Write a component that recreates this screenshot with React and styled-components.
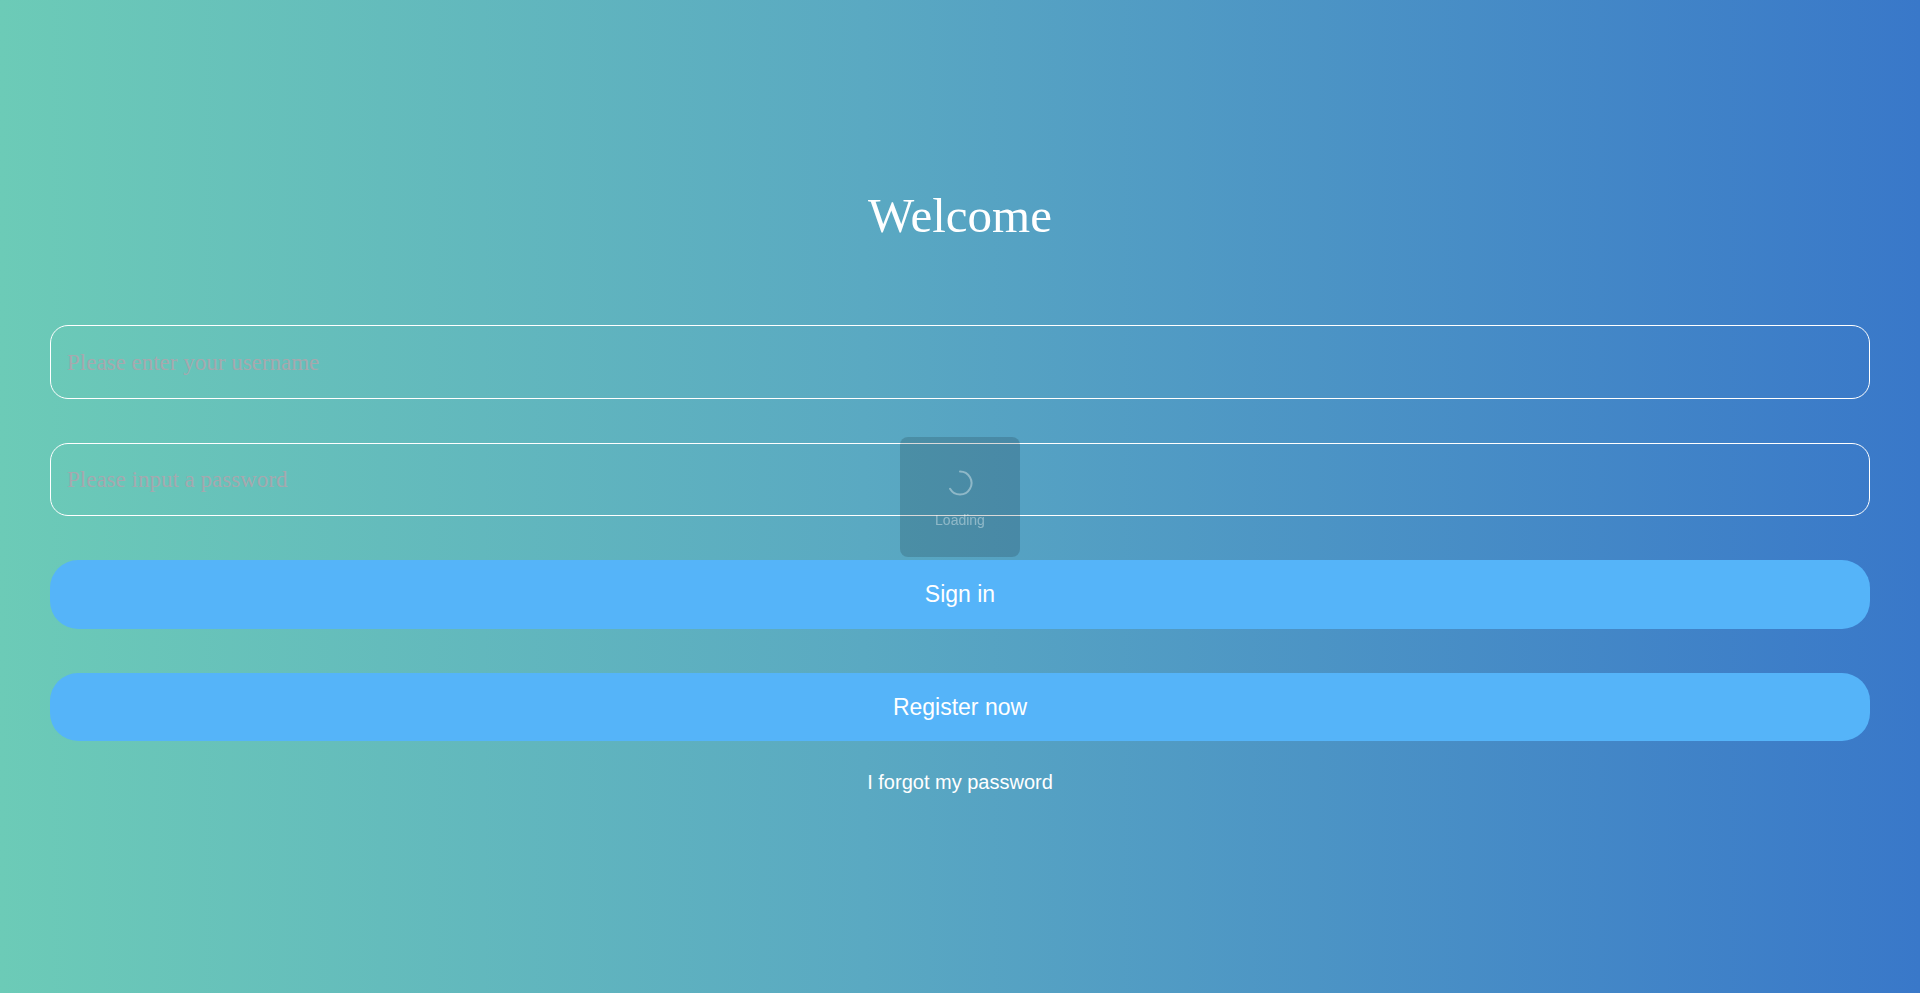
import React from 'react';
import styled, { createGlobalStyle } from 'styled-components';

const GlobalStyle = createGlobalStyle`
  * {
    box-sizing: border-box;
  }
  html,
  body {
    margin: 0;
    padding: 0;
  }
  body {
    font-family: 'Liberation Serif', 'Times New Roman', serif;
  }
`;

function Spinner() {
  return (
    <svg width='26' height='26' viewBox='0 0 26 26' fill='none'>
      <path
        d='M13 1.5 A11.5 11.5 0 1 1 3.04 18.75'
        stroke='rgba(255,255,255,0.38)'
        strokeWidth='2'
        strokeLinecap='round'
      />
    </svg>
  );
}

function App() {
  return (
    <>
      <GlobalStyle />
      <PageWrapper>
        <Title>Welcome</Title>
        <LoginForm onSubmit={(e) => e.preventDefault()}>
          <TextField type='text' placeholder='Please enter your username' />
          <TextField type='password' placeholder='Please input a password' />
          <PrimaryButton type='submit'>Sign in</PrimaryButton>
          <PrimaryButton type='button'>Register now</PrimaryButton>
          <ForgotLink href='#'>I forgot my password</ForgotLink>
        </LoginForm>
      </PageWrapper>
      <LoadingToast>
        <Spinner />
        <LoadingText>Loading</LoadingText>
      </LoadingToast>
    </>
  );
}

export default App;

const PageWrapper = styled.div`
  min-height: 100vh;
  padding: 189px 50px 0;
  background: linear-gradient(to right, #6ccbb7 0%, #5aa9c2 45%, #3978c9 100%);
  display: flex;
  flex-direction: column;
`;

const Title = styled.h1`
  margin: 0 0 82px;
  text-align: center;
  color: #fff;
  font-family: 'Liberation Serif', 'Times New Roman', serif;
  font-size: 49px;
  font-weight: 400;
  line-height: 54px;
`;

const LoginForm = styled.form`
  display: flex;
  flex-direction: column;
  gap: 44px;
`;

const TextField = styled.input`
  display: block;
  width: 100%;
  height: 73.5px;
  padding: 2px 16px 0;
  border: 1px solid #fff;
  border-radius: 18px;
  background: transparent;
  color: #fff;
  font-family: 'Liberation Serif', 'Times New Roman', serif;
  font-size: 23px;
  outline: none;
  &::placeholder {
    color: #a6a8ae;
  }
`;

const PrimaryButton = styled.button`
  display: block;
  width: 100%;
  height: 68.7px;
  border: none;
  border-radius: 28px;
  background: #55b4f9;
  color: #fff;
  font-family: 'Liberation Sans', Arial, sans-serif;
  font-size: 23px;
  cursor: pointer;
`;

const ForgotLink = styled.a`
  margin-top: -14px;
  align-self: center;
  color: #fff;
  font-family: 'Liberation Sans', Arial, sans-serif;
  font-size: 20px;
  line-height: 23px;
  text-decoration: none;
`;

const LoadingToast = styled.div`
  position: fixed;
  top: 50%;
  left: 50%;
  width: 120px;
  height: 120px;
  transform: translate(-50%, -50%);
  border-radius: 8px;
  background: rgba(0, 0, 0, 0.15);
  display: flex;
  flex-direction: column;
  align-items: center;
  padding-top: 33px;
`;

const LoadingText = styled.span`
  margin-top: 16px;
  color: rgba(255, 255, 255, 0.38);
  font-family: 'Liberation Sans', Arial, sans-serif;
  font-size: 14px;
  line-height: 16px;
`;
